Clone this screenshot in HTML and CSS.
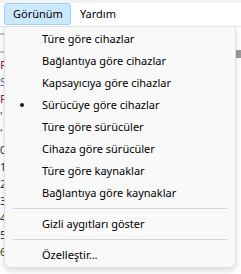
FILE: index.html
```html
<!DOCTYPE html>
<html lang="tr">
<head>
    <meta charset="UTF-8">
    <title>Aygıt Yöneticisi</title>
    <link rel="stylesheet" href="styles.css">
</head>
<body>
    <div class="menubar">
        <span class="menubar-item active">Görünüm</span>
        <span class="menubar-item">Yardım</span>
    </div>
    <div class="content">
        <div class="tree">
            <div class="tree-tool"></div>
            <div class="tree-row c1">F</div>
            <div class="tree-row c2">Si</div>
            <div class="tree-row c1">F</div>
            <div class="tree-row">'</div>
            <div class="tree-row">'</div>
            <div class="tree-row">0</div>
            <div class="tree-row">1</div>
            <div class="tree-row">2</div>
            <div class="tree-row">3</div>
            <div class="tree-row">4</div>
            <div class="tree-row">5</div>
            <div class="tree-row">6</div>
        </div>
        <div class="side-bar"></div>

        <ul class="menu">
            <li class="menu-item">Türe göre cihazlar</li>
            <li class="menu-item">Bağlantıya göre cihazlar</li>
            <li class="menu-item">Kapsayıcıya göre cihazlar</li>
            <li class="menu-item checked">Sürücüye göre cihazlar</li>
            <li class="menu-item">Türe göre sürücüler</li>
            <li class="menu-item">Cihaza göre sürücüler</li>
            <li class="menu-item">Türe göre kaynaklar</li>
            <li class="menu-item">Bağlantıya göre kaynaklar</li>
            <li class="separator"></li>
            <li class="menu-item">Gizli aygıtları göster</li>
            <li class="separator"></li>
            <li class="menu-item">Özelleştir...</li>
        </ul>
    </div>
</body>
</html>
```

FILE: styles.css
```css
body {
    margin: 0;
    width: 241px;
    height: 274px;
    overflow: hidden;
    background: #ffffff;
    font-family: "Noto Sans", "Open Sans", sans-serif;
    font-size: 11px;
    color: #000000;
}

.menubar {
    display: flex;
    align-items: center;
    height: 22px;
    padding: 3px 0 1px 4px;
    background: #ffffff;
    box-shadow: inset 0 3px 0 #f3f3f3;
    border-bottom: 1px solid #e6e6e6;
}
.menubar-item {
    padding: 1px 7px 2px 8px;
    line-height: 17px;
    border: 1px solid transparent;
    border-radius: 3px;
}
.menubar-item.active {
    background: #cce8ff;
    border-color: #99d1ff;
}

.content {
    position: relative;
    display: flex;
    height: 247px;
}
.tree {
    width: 8px;
    padding-top: 6px;
    font-size: 11px;
    color: #333;
}
.tree-tool {
    height: 16px;
    margin-bottom: 4px;
    border-top: 2px solid #b9c9d9;
    border-bottom: 2px solid #b9c9d9;
}
.tree-row {
    height: 16px;
    line-height: 16px;
    margin-bottom: 1px;
}
.tree-row.c1 { color: #7a1f5a; }
.tree-row.c2 { color: #2b6fb0; }
.side-bar {
    margin-left: auto;
    margin-top: 23px;
    width: 5px;
    height: 8px;
    background: #9a9a9a;
}

/* acilir menu */
.menu {
    position: absolute;
    left: 4px;
    top: 0;
    width: 232px;
    margin: 0;
    padding: 1px 0 1px 0;
    list-style: none;
    background: #f9f9f9;
    border: 1px solid #e0e0e0;
    border-top: 0;
    border-radius: 0 0 7px 7px;
    box-shadow: 0 3px 6px rgba(0, 0, 0, 0.14);
    box-sizing: border-box;
}
.menu-item {
    position: relative;
    height: 22px;
    line-height: 22px;
    padding-left: 37px;
    white-space: nowrap;
}
.menu-item.checked::before {
    content: "";
    position: absolute;
    left: 15px;
    top: 9px;
    width: 4px;
    height: 4px;
    border-radius: 50%;
    background: #1a1a1a;
}
.separator {
    height: 1px;
    margin: 4px 8px 4px 8px;
    background: #d6d6d6;
}
```
